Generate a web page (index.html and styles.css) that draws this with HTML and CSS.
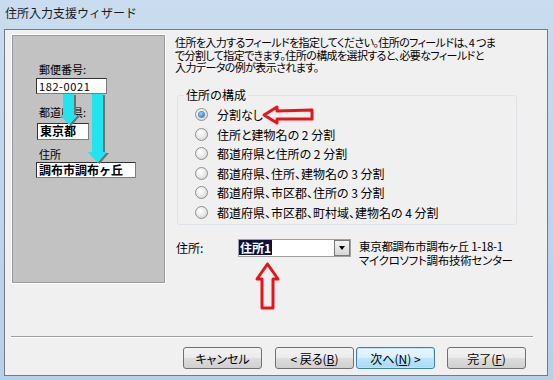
FILE: index.html
```html
<!DOCTYPE html>
<html lang="ja">
  <head>
    <meta charset="UTF-8" />
    <title>住所入力支援ウィザード</title>
    <link rel="stylesheet" href="styles.css">
  </head>
  <body>
    <div class="window">
      <div class="titlebar">住所入力支援ウィザード</div>
      <div class="client">
        <div class="main">
          <div class="picture">
            <p class="pic-label">郵便番号:</p>
            <p class="pic-box zip">182-0021</p>
            <p class="pic-label second">都道府県:</p>
            <p class="pic-box pref">東京都</p>
            <p class="pic-label third">住所</p>
            <p class="pic-box addr">調布市調布ヶ丘</p>
            <svg class="pic-arrows" width="155" height="250" viewBox="0 0 155 250">
              <path d="M54,61 H65 V82 H69 L60,92 L51,82 H54 Z" fill="#707070" />
              <path d="M83,61 H94 V119 H98 L88.5,130 L79,119 H83 Z" fill="#707070" />
              <path d="M52,60 H63 V81 H67 L58,91 L49,81 H52 Z" fill="#22e4ee" />
              <path d="M81,60 H92 V118 H96 L86.5,129 L77,118 H81 Z" fill="#22e4ee" />
            </svg>
          </div>

          <div class="settings">
            <p class="intro">住所を入力するフィールドを指定してください。住所のフィールドは、4 つま<br>で分割して指定できます。住所の構成を選択すると、必要なフィールドと<br>入力データの例が表示されます。</p>

            <fieldset class="layout">
              <legend>住所の構成</legend>
              <div class="option"><span class="radio checked"></span>分割なし</div>
              <div class="option"><span class="radio"></span>住所と建物名の 2 分割</div>
              <div class="option"><span class="radio"></span>都道府県と住所の 2 分割</div>
              <div class="option"><span class="radio"></span>都道府県、住所、建物名の 3 分割</div>
              <div class="option"><span class="radio"></span>都道府県、市区郡、住所の 3 分割</div>
              <div class="option"><span class="radio"></span>都道府県、市区郡、町村域、建物名の 4 分割</div>
            </fieldset>

            <div class="field-row">
              <span class="field-label">住所:</span>
              <div class="combo">
                <span class="combo-value">住所1</span>
                <span class="combo-button"></span>
              </div>
              <p class="sample">東京都調布市調布ヶ丘 1-18-1<br>マイクロソフト調布技術センター</p>
            </div>
          </div>

          <!-- red marks drawn over the dialog -->
          <svg class="mark mark-left" width="66" height="30" viewBox="0 0 66 30">
            <path d="M8,15 L21,7 L21,11 L56,10 L56,19 L21,19 L21,23 Z" fill="none" stroke="#e8141c" stroke-width="3" stroke-linejoin="round" />
          </svg>
          <svg class="mark mark-up" width="34" height="56" viewBox="0 0 34 56">
            <path d="M17.5,6 L28,21 L23,21 L23,50 L12,50 L12,21 L7,21 Z" fill="none" stroke="#e8141c" stroke-width="3" stroke-linejoin="round" />
          </svg>
        </div>

        <div class="separator"></div>

        <div class="buttons">
          <button class="btn cancel" type="button">キャンセル</button>
          <button class="btn back" type="button">&lt; 戻る(<u>B</u>)</button>
          <button class="btn next" type="button">次へ(<u>N</u>) &gt;</button>
          <button class="btn finish" type="button">完了(<u>F</u>)</button>
        </div>
      </div>
    </div>
  </body>
</html>
```

FILE: styles.css
```css
* {
  margin: 0;
  padding: 0;
  box-sizing: border-box;
}

body {
  font-family: "Noto Sans CJK JP", "Noto Sans", sans-serif;
  font-size: 12px;
  color: #000;
  background: #bcd3eb;
}

.window {
  width: 553px;
  height: 380px;
  background: linear-gradient(to bottom, #c9dcf0, #b8cfe8);
  overflow: hidden;
}

.titlebar {
  height: 29px;
  padding-left: 5px;
  line-height: 26px;
  font-size: 12px;
  color: #1a1a1a;
}

.client {
  position: relative;
  margin-left: 4px;
  width: 544px;
  height: 347px;
  border: 1px solid #6f7c8a;
  background: #f0f0f0;
  display: flex;
  flex-direction: column;
}

.main {
  flex: 1;
  display: flex;
  align-items: flex-start;
  padding: 4px 0 0 6px;
}

/* picture on the left */
.picture {
  position: relative;
  width: 155px;
  height: 250px;
  border: 1px solid #fff;
  box-shadow: inset 0 0 0 1px #9a9a9a;
  background: #c2c2c2;
  padding: 28px 0 0 24px;
  font-size: 11px;
}

.pic-label {
  margin-left: 3px;
  line-height: 13px;
  height: 13px;
}

.pic-label.second {
  margin-top: 12px;
}

.pic-label.third {
  margin-top: 8px;
}

.pic-box {
  background: #fff;
  border: 1px solid #7c7c7c;
  border-top-color: #333;
  border-left-color: #333;
  line-height: 14px;
  padding-left: 2px;
}

.zip {
  width: 71px;
  height: 16px;
  margin-top: 2px;
  font-size: 11px;
  letter-spacing: 0.6px;
}

.pref {
  width: 52px;
  height: 17px;
  margin: 4px 0 0 1px;
  font-size: 12px;
  font-weight: bold;
}

.addr {
  width: 100px;
  height: 16px;
  margin-top: 1px;
  font-size: 12px;
  font-weight: bold;
}

.pic-arrows {
  position: absolute;
  left: -1px;
  top: -1px;
}

/* right column */
.settings {
  margin-left: 9px;
  padding-top: 2px;
  width: 350px;
}

.intro {
  font-size: 11px;
  line-height: 12.5px;
  white-space: nowrap;
  font-feature-settings: "palt";
  letter-spacing: -0.6px;
}

.layout {
  margin: 14.5px 0 0 2px;
  width: 340px;
  border: 1px solid #dde3e8;
  border-radius: 3px;
  padding: 3px 0 2px 17px;
}

.layout legend {
  margin-left: -11px;
  padding: 0 2px;
  line-height: 14px;
}

.option {
  height: 19.5px;
  display: flex;
  align-items: center;
  font-feature-settings: "palt";
  white-space: nowrap;
}

.radio {
  width: 13px;
  height: 13px;
  margin-right: 9px;
  border-radius: 50%;
  border: 1px solid #8e8f8f;
  background: radial-gradient(circle at 40% 35%, #fff 0%, #ececec 45%, #c9c9c9 100%);
  display: flex;
  align-items: center;
  justify-content: center;
}

.radio.checked::after {
  content: "";
  width: 5px;
  height: 5px;
  border-radius: 50%;
  background: radial-gradient(circle at 40% 35%, #9adcff, #1a5c9c);
  box-shadow: 0 0 0 1px #4f8fc8;
}

.field-row {
  display: flex;
  align-items: flex-start;
  margin: 14px 0 0 1px;
}

.field-label {
  width: 62px;
  line-height: 17px;
}

.combo {
  width: 113px;
  height: 18px;
  border: 1px solid #a0a0a0;
  background: #fff;
  display: flex;
  justify-content: space-between;
}

.combo-value {
  height: 15px;
  line-height: 15px;
  padding: 0 1px;
  background: #10103c;
  color: #fff;
  font-weight: bold;
}

.combo-button {
  width: 16px;
  height: 16px;
  border: 1px solid #777;
  background: linear-gradient(#f4f4f4, #d6d6d6);
  display: flex;
  align-items: center;
  justify-content: center;
}

.combo-button::after {
  content: "";
  border-left: 3.5px solid transparent;
  border-right: 3.5px solid transparent;
  border-top: 4px solid #000;
}

.sample {
  margin: 0 0 0 8px;
  font-size: 11.5px;
  line-height: 14px;
  white-space: nowrap;
  font-feature-settings: "palt";
  letter-spacing: -0.3px;
}

.mark {
  position: absolute;
}

.mark-left {
  left: 251px;
  top: 70px;
}

.mark-up {
  left: 245px;
  top: 228px;
}

/* bottom */
.separator {
  height: 2px;
  margin: 0 14px 0 6px;
  border-top: 1px solid #a0a0a0;
  border-bottom: 1px solid #fff;
}

.buttons {
  display: flex;
  justify-content: flex-end;
  padding: 9px 21px 6px 0;
}

.btn {
  width: 79px;
  height: 22px;
  border: 1px solid #707070;
  border-radius: 3px;
  background: linear-gradient(#f3f3f3 0%, #ebebeb 48%, #dddddd 52%, #cfcfcf 100%);
  font-family: "Noto Sans CJK JP", sans-serif;
  font-size: 12px;
  color: #000;
  font-feature-settings: "palt";
}

.back {
  margin-left: 13px;
}

.next {
  margin-left: 2px;
  border-color: #3c7fb1;
  box-shadow: inset 0 0 0 1px #bfe6f8;
  background: linear-gradient(#eaf6fd 0%, #d9f0fc 48%, #bee6fd 52%, #a7d9f5 100%);
}

.finish {
  margin-left: 12px;
}
```
